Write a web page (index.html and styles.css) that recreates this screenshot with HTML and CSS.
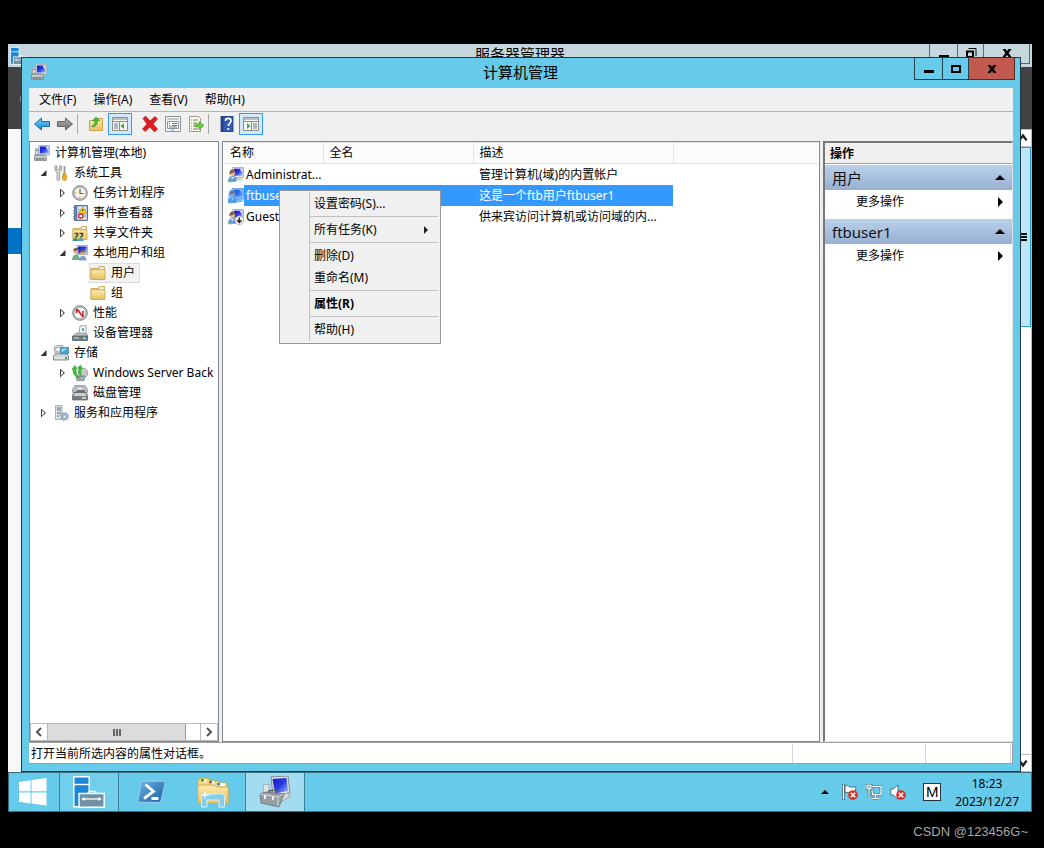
FILE: index.html
```
<!DOCTYPE html>
<html lang="zh-CN">
<head>
<meta charset="utf-8">
<title>计算机管理</title>
<link rel="stylesheet" href="styles.css">
</head>
<body>
<svg class="defs" aria-hidden="true">
  <defs>
    <linearGradient id="gScreen" x1="0" y1="0" x2="1" y2="1"><stop offset="0" stop-color="#0a14c8"/><stop offset=".5" stop-color="#2a3ce0"/><stop offset="1" stop-color="#a8c4ff"/></linearGradient>
    <linearGradient id="gBlue" x1="0" y1="0" x2="0" y2="1"><stop offset="0" stop-color="#7fd0fa"/><stop offset="1" stop-color="#0d84d8"/></linearGradient>
    <linearGradient id="gGray" x1="0" y1="0" x2="0" y2="1"><stop offset="0" stop-color="#b4b4b4"/><stop offset="1" stop-color="#6e6e6e"/></linearGradient>
    <linearGradient id="gFolder" x1="0" y1="0" x2="0" y2="1"><stop offset="0" stop-color="#fcebae"/><stop offset="1" stop-color="#e6c163"/></linearGradient>
    <linearGradient id="gMetal" x1="0" y1="0" x2="0" y2="1"><stop offset="0" stop-color="#eef1f2"/><stop offset="1" stop-color="#7c8488"/></linearGradient>
    <linearGradient id="gPs" x1="0" y1="0" x2="1" y2="1"><stop offset="0" stop-color="#6db4e6"/><stop offset="1" stop-color="#1a5f9e"/></linearGradient>
    <symbol id="computer" viewBox="0 0 16 16">
      <path d="M5 .5h10.500v9.500H5z" fill="#d9dde0" stroke="#b0b6ba"/><path d="M6 1.500H14.500v7H6z" fill="url(#gScreen)"/><path d="M11.500 1.500h3v5z" fill="#dbe7ff"/>
      <path d="M1.500 3.500h3v6h-3z" fill="#d6dadc" stroke="#a3aaae"/><path d="M2 5.500h2" stroke="#7a8488"/>
      <path d="M.5 10h10.500l1.500 2v3.500H.5z" fill="#a3abae" stroke="#7a8387" stroke-width=".7"/><path d="M1 12h11" stroke="#e8ebec"/><path d="M3 13v1.500m3-1.500v1.500m3-1.500v1.500" stroke="#454c50"/>
    </symbol>
    <symbol id="tools" viewBox="0 0 16 16">
      <path d="M2 1v4.500l2 1.500v7.500c0 1.300 2.600 1.300 2.600 0V7L8.500 5.500V1L6.700.8v3.700h-3V.8z" fill="#dcdcdc" stroke="#888" stroke-width=".8"/>
      <path d="M11.500 1v7" stroke="#999" stroke-width="1.800"/><path d="M10 8.500h3l.5 5c0 2.500-4 2.500-4 0z" fill="#f4a915" stroke="#c98a10" stroke-width=".7"/>
    </symbol>
    <symbol id="clock" viewBox="0 0 16 16"><circle cx="8" cy="8" r="7.300" fill="#c5c7c9" stroke="#85898c"/><circle cx="8" cy="8" r="5.700" fill="#fcf6e2" stroke="#98a0a4" stroke-width=".6"/><path d="M8 4v4.500h3.500" fill="none" stroke="#46617c" stroke-width="1.200"/><path d="M8 11v2M3.500 8H5" stroke="#d79b38"/></symbol>
    <symbol id="event" viewBox="0 0 16 16"><path d="M2.500.5h13v15h-13z" fill="#b6c9e6" stroke="#5471a0"/><path d="M2.500.5h2.500v15H2.500z" fill="#5b7ab0"/><path d="M1 2.500h3m-3 3h3m-3 3h3m-3 3h3m-3 2.500h3" stroke="#888"/><path d="M6.500 3h8M6.500 13.500h8" stroke="#fff"/><path d="m10.800 1.800 3.800 6.400H7z" fill="#ffdc20" stroke="#c49100" stroke-width=".7"/><path d="M10.800 4v2.500" stroke="#333"/><circle cx="8.800" cy="11" r="3" fill="#d9484a"/><path d="M7.700 10h2.200v2H7.700z" fill="#fff"/></symbol>
    <symbol id="folder" viewBox="0 0 16 16"><path d="M1 3.500h7l1.500-2h5v12.500H1z" fill="#e8c977" stroke="#c9a54f" stroke-width=".8"/><path d="M10 2.300h3.500v1.700H10z" fill="#fff"/><path d="M1 4.800h14v9.700H1z" fill="url(#gFolder)" stroke="#cca64d" stroke-width=".8"/></symbol>
    <symbol id="share" viewBox="0 0 16 16"><use href="#folder"/><path d="M2.500 8.500h3v2l-2 2M7.500 8.500h3v2l-2 2" fill="none" stroke="#4b4238" stroke-width="1.500"/><path d="M.5 16c0-4 5.500-4 5.500 0z" fill="#2e9a74"/><path d="M6 16c0-4 5.500-4 5.500 0z" fill="#4aa2cb"/></symbol>
    <symbol id="users" viewBox="0 0 16 16"><path d="M5 .5h10.500v9H5z" fill="#e1e5e7" stroke="#a8aeb2"/><path d="M6 1.500h8.500v7H6z" fill="url(#gScreen)"/><circle cx="4" cy="6" r="2.500" fill="#dca873"/><path d="M1.400 6c0-4 5.200-4 5.200-1z" fill="#7a5a3c"/><path d="M0 15c0-7.500 8-7.500 8 0z" fill="#74ae86"/><circle cx="10.500" cy="8" r="2.300" fill="#e2b183"/><path d="M8.200 8c0-4 4.800-4 4.800-1z" fill="#8b6742"/><path d="M7 15.500c0-6.500 7.500-6.500 7.500 0z" fill="#7f9fd2"/></symbol>
    <symbol id="user" viewBox="0 0 16 16"><path d="M4.500.5h11v10h-11z" fill="#dfe3e5" stroke="#b3b8bb"/><path d="M6 1.700h8.300v7H6z" fill="url(#gScreen)"/><path d="M11.500 1.700h2.800v4z" fill="#dbe7ff"/><path d="M8.500 11h5.500l1 2.500H8z" fill="#ccd1d3"/><circle cx="4.300" cy="6" r="2.800" fill="#e4b282"/><path d="M1.500 7C.7 1.500 7.500 1.500 7 5z" fill="#7f6148"/><path d="M0 14.500c0-7 8.500-7 9-1L7 15z" fill="#6b9cd6"/><path d="m3 10 1.200 2L6 10z" fill="#fff"/><path d="M0 14.500h4" stroke="#7bbd60" stroke-width="1.500"/></symbol>
    <symbol id="userSel" viewBox="0 0 16 16"><use href="#user"/><path d="M4.500 0h11.500v11l-2 3-7 1H0V8l1-5z" fill="#3399ff" opacity=".5"/></symbol>
    <symbol id="userOff" viewBox="0 0 16 16"><use href="#user"/><circle cx="11.300" cy="11.300" r="4.300" fill="#fafafa" stroke="#9da1a3" stroke-width=".8"/><path d="M11.300 8.500v5M9 11.200l2.300 2.300 2.300-2.300" fill="none" stroke="#222" stroke-width="1.400"/></symbol>
    <symbol id="perf" viewBox="0 0 16 16"><circle cx="8" cy="8" r="7.300" fill="#c9cccd" stroke="#808486"/><circle cx="8" cy="8" r="5.800" fill="#fff" stroke="#85898b" stroke-width=".6"/><path d="m5 4 6 8M4.500 8V5l3 1M11 6v6" fill="none" stroke="#cf2020" stroke-width="1.500"/></symbol>
    <symbol id="device" viewBox="0 0 16 16"><path d="m8 1 6-1v9H7z" fill="#f5f6f6" stroke="#a4aaac"/><path d="M10 3h2v3h-2z" fill="#58a9a0"/><path d="M4 8h9l3 2v2H0z" fill="#b9c0c3" stroke="#7d868a" stroke-width=".6"/><path d="M.5 11h15v4.500H.5z" fill="#6d7b81" stroke="#4e5a5f" stroke-width=".7"/><path d="M2 13h5" stroke="#dce4e6"/><path d="M11 12.500h3v1.500h-3z" fill="#a9e3ef"/></symbol>
    <symbol id="storage" viewBox="0 0 16 16"><path d="M1 2 4 .5h6L9 8H2z" fill="#d7dadb" stroke="#9ba2a6" stroke-width=".8"/><circle cx="5" cy="4.500" r="2.300" fill="#fff" stroke="#999" stroke-width=".8"/><path d="M7.500 2.500h8v6h-8z" fill="#3aa6d8" stroke="#577b8c" stroke-width=".8"/><path d="M8.500 3.500h6l-6 4z" fill="#8bd7f4"/><path d="m2 9-1.500 2v4h15v-4L14 9z" fill="url(#gMetal)" stroke="#6e767a" stroke-width=".8"/><path d="M1 11.500h14v3H1z" fill="#e0e4e5"/><path d="M12 12h2v2h-2z" fill="#38b838"/></symbol>
    <symbol id="backup" viewBox="0 0 16 16"><circle cx="11" cy="8" r="4.800" fill="#cbd0d2" stroke="#8b9397" stroke-width=".8"/><circle cx="11.500" cy="8" r="1.500" fill="#fff" stroke="#888" stroke-width=".7"/><path d="M4 11h9l-1 4.500H5z" fill="#a8afb2" stroke="#6e777b" stroke-width=".7"/><path d="M0 4 3 .5 5 4 4 5c0 3 1 6 4 8-5-1-7-4-7-8zM5.500 3l3-3 2 4H9c0 3-1 5 1 8-3-2-4-5-3-8z" fill="#3dbf36" stroke="#2f9a30" stroke-width=".5"/></symbol>
    <symbol id="disk" viewBox="0 0 16 16"><path d="M3 .5h10l2.500 4v3H.5v-3z" fill="#b9bdbf" stroke="#84898c" stroke-width=".7"/><ellipse cx="8" cy="3.500" rx="3.500" ry="1.500" fill="#f2f2f2" stroke="#888" stroke-width=".6"/><path d="m3 7-2.500 3v5h15v-5L13 7z" fill="#777e81" stroke="#5e6568" stroke-width=".7"/><path d="M3 8h10l2 3H1z" fill="#cdd0d1"/><path d="M10 13h4" stroke="#d6f1d5" stroke-width="1.500"/><path d="M5 6h8" stroke="#54595c" stroke-width="1.300"/></symbol>
    <symbol id="services" viewBox="0 0 16 16"><path d="M2.500.5H9v14H2.500z" fill="#dde1e3" stroke="#9aa2a6" stroke-width=".8"/><path d="M4 3h4M4 5h4M4 8h4" stroke="#5b7480"/><path d="M4 11h2" stroke="#3a9a4c"/><circle cx="11.500" cy="11.500" r="2.900" fill="#c6dbea" stroke="#7fa3bd" stroke-width="1.200"/><circle cx="11.500" cy="11.500" r="3.900" fill="none" stroke="#7fa3bd" stroke-width="1.200" stroke-dasharray="1.500 1.550"/><circle cx="11.500" cy="11.500" r="1.200" fill="#fff" stroke="#5f87a3" stroke-width=".6"/></symbol>
    <symbol id="badge" viewBox="0 0 10 10"><circle cx="5" cy="5" r="4.800" fill="#d92c23"/><path d="m2.800 2.800 4.400 4.400m0-4.400L2.800 7.200" stroke="#fff" stroke-width="1.600"/></symbol>
    <symbol id="server" viewBox="0 0 32 32"><path d="M.8.8h15.400v30H.8z" fill="#1c86d8" stroke="#fff" stroke-width="1.400"/><path d="M1 8.500h15" stroke="#fff" stroke-width="1.400"/><path d="M15 17c0-2.500 8-2.500 8 0" fill="none" stroke="#fff" stroke-width="1.300"/><path d="M6 17.500h25.200v13.700H6z" fill="#7192a4" stroke="#fff" stroke-width="1.400"/><path d="M9 23h19" stroke="#fff" stroke-width="1.300"/><path d="m8.500 23 3-2v4zm20 0-3-2v4z" fill="#fff"/></symbol>
  </defs>
</svg>

<div class="screen">
  <main class="desktop">
    <section class="bg-window" aria-label="服务器管理器">
      <header class="bg-title">
        <svg class="bg-icon" viewBox="0 0 32 32"><use href="#server"/></svg>
        <h2 class="bg-caption">服务器管理器</h2>
        <div class="controls bg-controls">
          <button class="ctl" aria-label="最小化"><svg viewBox="0 0 12 12"><path d="M1 8h10v3H1z"/></svg></button>
          <button class="ctl ctl-max" aria-label="还原"><svg viewBox="0 0 12 12"><path d="M2 4.500h6V10H2z" fill="none" stroke="#000" stroke-width="2"/><path d="M3.500 1.500h7.500V9" fill="none" stroke="#000"/></svg></button>
          <button class="ctl ctl-wide" aria-label="关闭"><svg viewBox="0 0 12 12"><path d="M1.500 2h3L6 4l1.500-2h3L7.700 6l2.800 4h-3L6 8l-1.500 2h-3l2.800-4z"/></svg></button>
        </div>
      </header>
      <div class="bg-banner"><svg class="bg-circle" viewBox="0 0 20 30"><circle cx="18" cy="15" r="14" fill="none" stroke="#ddd" stroke-width="3"/></svg></div>
      <div class="bg-body">
        <nav class="bg-nav"><div class="bg-selected"></div></nav>
        <div class="bg-scroll">
          <button class="bg-arrow" aria-label="向上滚动"><svg viewBox="0 0 10 10"><path d="m2 7 3-4 3 4" /></svg></button>
          <div class="bg-thumb"><i></i><i></i><i></i></div>
          <button class="bg-arrow bg-down" aria-label="向下滚动"><svg viewBox="0 0 10 10"><path d="m2 3 3 4 3-4" /></svg></button>
        </div>
      </div>
    </section>

    <section class="window" aria-label="计算机管理">
      <header class="titlebar">
        <svg class="icon title-icon"><use href="#computer"/></svg>
        <h1 class="caption">计算机管理</h1>
        <div class="controls">
          <button class="ctl" aria-label="最小化"><svg viewBox="0 0 12 12"><path d="M1 7h10v3H1z"/></svg></button>
          <button class="ctl ctl-max" aria-label="最大化"><svg viewBox="0 0 12 12"><path d="M2 3h8v6H2z" fill="none" stroke="#000" stroke-width="2"/></svg></button>
          <button class="ctl ctl-wide ctl-close" aria-label="关闭"><svg viewBox="0 0 12 12"><path d="M1.500 2h3L6 4l1.500-2h3L7.700 6l2.800 4h-3L6 8l-1.500 2h-3l2.800-4z"/></svg></button>
        </div>
      </header>
      <div class="frame">
        <nav class="menubar">
          <button>文件(F)</button><button>操作(A)</button><button>查看(V)</button><button>帮助(H)</button>
        </nav>
        <div class="toolbar">
          <button aria-label="后退"><svg class="icon" viewBox="0 0 16 16"><path d="m.5 8 7-6v3.500h8v5h-8V14z" fill="url(#gBlue)" stroke="#1c6eae"/></svg></button>
          <button aria-label="前进"><svg class="icon" viewBox="0 0 16 16"><path d="m15.500 8-7-6v3.500h-8v5h8V14z" fill="url(#gGray)" stroke="#666"/></svg></button>
          <span class="sep"></span>
          <button aria-label="上一级"><svg class="icon" viewBox="0 0 16 16"><path d="M1.500 4.500H8l1.500-2h5v12h-13z" fill="url(#gFolder)" stroke="#c9a54f"/><path d="M4 10c3-1 3-3 3-5.500H4.500L8 1l4 3.500H9.500c0 4-2 6-5 6.500z" fill="#49c437" stroke="#2b8c26" stroke-width=".6"/></svg></button>
          <button class="on" aria-label="显示控制台树"><svg class="icon" viewBox="0 0 16 16"><path d="M.5 1.500h15v13H.5z" fill="#f6f6f4" stroke="#8b8f91"/><path d="M1 3h14M1 5.500h14M7.500 6v8" stroke="#858c92"/><path d="M2 8h4M2 10h4M2 12h4" stroke="#627889"/><path d="M12 7v6l-3.500-3z" fill="#3fae2e"/></svg></button>
          <span class="sep sep-hidden"></span>
          <button aria-label="删除"><svg class="icon" viewBox="0 0 16 16"><path d="M1 2.500 3.500 0 8 5l5-4.500 2.500 2.500L11 8l4.500 5-3 3L8 11l-5 4.500L.5 13 5 8z" fill="#e01d22" stroke="#a70e12" stroke-width=".6"/></svg></button>
          <button aria-label="属性"><svg class="icon" viewBox="0 0 16 16"><path d="M.5.5h15v15H.5z" fill="#f5f5f5" stroke="#8f9496"/><path d="M2.500 3h11M2.500 5.500h11v7h-11z" fill="#fff" stroke="#8d989e"/><path d="M4 7.500h1m2 0h5M4 9.500h1m2 0h5M4 11h8" stroke="#667b88"/><path d="M6 14h3" stroke="#42b7df"/></svg></button>
          <button aria-label="导出列表"><svg class="icon" viewBox="0 0 16 16"><path d="M1.500.5h9l2 2v13h-11z" fill="#fdfbed" stroke="#a09c84"/><path d="M3 4h1m1 0h5M3 7h1m1 0h4M3 10h1m1 0h4M3 13h1m1 0h5" stroke="#777"/><path d="M7 8h4V5.500l5 4-5 4V11H7z" fill="#6ccb3a" stroke="#439a24" stroke-width=".6"/></svg></button>
          <span class="sep"></span>
          <button aria-label="帮助"><svg class="icon" viewBox="0 0 16 16"><path d="M2 0h12v16H2z" fill="#3458b8" stroke="#1d3274" stroke-width=".8"/><path d="M2.500 0h1.800v16H2.500z" fill="#203c88"/><path d="M6.500 5c0-3.500 5.500-3.500 5.500 0 0 2-2.700 2.200-2.700 5M9.300 12v2" fill="none" stroke="#fff" stroke-width="1.700"/></svg></button>
          <button class="on" aria-label="显示操作窗格"><svg class="icon" viewBox="0 0 16 16"><path d="M.5 1.500h15v13H.5z" fill="#f6f6f4" stroke="#8b8f91"/><path d="M1 3h14M1 5.500h14M8.500 6v8" stroke="#858c92"/><path d="M10 8h4M10 10h4M10 12h4" stroke="#627889"/><path d="M4 7v6l3.500-3z" fill="#3fae2e"/></svg></button>
        </div>

        <div class="panes">
          <aside class="pane tree-pane">
            <ul class="tree">
              <li class="l0"><svg class="icon"><use href="#computer"/></svg><span>计算机管理(本地)</span></li>
              <li class="l1"><b class="tw open"></b><svg class="icon"><use href="#tools"/></svg><span>系统工具</span></li>
              <li class="l2"><b class="tw"></b><svg class="icon"><use href="#clock"/></svg><span>任务计划程序</span></li>
              <li class="l2"><b class="tw"></b><svg class="icon"><use href="#event"/></svg><span>事件查看器</span></li>
              <li class="l2"><b class="tw"></b><svg class="icon"><use href="#share"/></svg><span>共享文件夹</span></li>
              <li class="l2"><b class="tw open"></b><svg class="icon"><use href="#users"/></svg><span>本地用户和组</span></li>
              <li class="l3"><span class="leaf picked"><svg class="icon"><use href="#folder"/></svg><span>用户</span></span></li>
              <li class="l3"><span class="leaf"><svg class="icon"><use href="#folder"/></svg><span>组</span></span></li>
              <li class="l2"><b class="tw"></b><svg class="icon"><use href="#perf"/></svg><span>性能</span></li>
              <li class="l2"><b class="tw none"></b><svg class="icon"><use href="#device"/></svg><span>设备管理器</span></li>
              <li class="l1"><b class="tw open"></b><svg class="icon"><use href="#storage"/></svg><span>存储</span></li>
              <li class="l2"><b class="tw"></b><svg class="icon"><use href="#backup"/></svg><span>Windows Server Back</span></li>
              <li class="l2"><b class="tw none"></b><svg class="icon"><use href="#disk"/></svg><span>磁盘管理</span></li>
              <li class="l1"><b class="tw"></b><svg class="icon"><use href="#services"/></svg><span>服务和应用程序</span></li>
            </ul>
            <div class="hscroll">
              <button aria-label="向左滚动"><svg viewBox="0 0 10 10"><path d="M7 1 3 5l4 4"/></svg></button>
              <div class="track"><div class="thumb"><i></i><i></i><i></i></div></div>
              <button aria-label="向右滚动"><svg viewBox="0 0 10 10"><path d="m3 1 4 4-4 4"/></svg></button>
            </div>
          </aside>

          <div class="pane list-pane">
            <table class="list">
              <colgroup><col class="c-name"><col class="c-full"><col class="c-desc"><col></colgroup>
              <thead><tr><th>名称</th><th>全名</th><th>描述</th><th></th></tr></thead>
              <tbody>
                <tr><td class="name"><div><svg class="icon"><use href="#user"/></svg><span>Administrat...</span></div></td><td></td><td>管理计算机(域)的内置帐户</td><td></td></tr>
                <tr class="selected"><td class="name"><div><svg class="icon"><use href="#userSel"/></svg><span>ftbuser1</span></div></td><td></td><td>这是一个ftb用户ftbuser1</td><td></td></tr>
                <tr><td class="name"><div><svg class="icon"><use href="#userOff"/></svg><span>Guest</span></div></td><td></td><td>供来宾访问计算机或访问域的内...</td><td></td></tr>
              </tbody>
            </table>
            <div class="context" role="menu">
              <button role="menuitem">设置密码(S)...</button>
              <hr>
              <button role="menuitem" class="has-sub">所有任务(K)</button>
              <hr>
              <button role="menuitem">删除(D)</button>
              <button role="menuitem">重命名(M)</button>
              <hr>
              <button role="menuitem" class="default">属性(R)</button>
              <hr>
              <button role="menuitem">帮助(H)</button>
            </div>
          </div>

          <aside class="actions">
            <h2 class="actions-head">操作</h2>
            <section class="group">
              <button class="group-head">用户</button>
              <button class="more">更多操作</button>
            </section>
            <section class="group">
              <button class="group-head">ftbuser1</button>
              <button class="more">更多操作</button>
            </section>
          </aside>
        </div>
        <footer class="status"><span class="status-text">打开当前所选内容的属性对话框。</span><span class="status-a"></span><span class="status-b"></span></footer>
      </div>
    </section>
  </main>

  <footer class="taskbar">
    <button class="start" aria-label="开始"><svg viewBox="0 0 28 28"><path d="m0 4 11.500-1.700v11H0zm12.500-1.900L27.500 0v13.300h-15zM0 14.500h11.500v11L0 23.800zm12.500 0h15V27.500l-15-2z" fill="#fff"/></svg></button>
    <button class="task running" aria-label="服务器管理器"><svg viewBox="0 0 32 32"><use href="#server"/></svg></button>
    <button class="task" aria-label="PowerShell"><svg viewBox="0 0 32 32"><path d="M7 5h22c1 0 1.600.7 1.300 1.700L26 25c-.3 1-1 1.500-2 1.500H4c-1 0-1.500-.7-1.200-1.700L6 6.500C6.200 5.500 6.500 5 7 5z" fill="url(#gPs)" stroke="#8fc6ea" stroke-width="1.300"/><path d="m10.500 8.500 8 7L9 22.500M16.500 22.500h7" fill="none" stroke="#fff" stroke-width="2.800"/></svg></button>
    <button class="task" aria-label="文件资源管理器"><svg viewBox="0 0 32 32"><path d="M1 5 3 2h8l2 3h8l2 2h7v6H1z" fill="#f1d88b" stroke="#cda84d"/><path d="M4 3h5v3H4zM12 5h5v3h-5zM20 7h8v3h-8z" fill="#fff"/><path d="M4 3h3v2.500H4z" fill="#20ad36"/><path d="M12 5h3v2.500h-3z" fill="#d8452e"/><path d="M20 7h3v2.500h-3z" fill="#2b8ddd"/><path d="M.8 9h16l3 2h11.400v16.500H3c-2 0-2.200-1-2.200-3z" fill="url(#gFolder)" stroke="#d0ac55"/><path d="M4.500 31V21c0-2 1-3 3-3h17c2 0 3 1 3 3v10H22v-7H10v7z" fill="#86cdea" stroke="#d9f1fb"/><path d="m8 13 1 5 5 1-5 1-1 5-1-5-5-1 5-1z" fill="#fff" opacity=".8"/></svg></button>
    <button class="task active" aria-label="计算机管理"><svg viewBox="0 0 32 32"><path d="m12 1 17-1 2 17-17 3z" fill="#dce1e3" stroke="#81898e"/><path d="m13.500 3 14-1L29 15l-13 2.500z" fill="url(#gScreen)"/><path d="m4 9 6-1v10H5z" fill="#e0e4e5" stroke="#9ba3a8" stroke-width=".8"/><path d="m19 19 10-2 2 4-10 5z" fill="#d6dadc" stroke="#999" stroke-width=".8"/><path d="M10 18v-3l7-1v4" fill="none" stroke="#596167" stroke-width="1.500"/><path d="m1 18 6-2 18 2-5 13-18-4z" fill="#969ea2" stroke="#666e73" stroke-width=".8"/><path d="m1 18 18 3 5-3M19 21v9" fill="none" stroke="#d8dde0"/><path d="M6 19v4m8-3v4" stroke="#ecefef" stroke-width="2"/></svg></button>
    <div class="tray">
      <button class="tray-up" aria-label="显示隐藏的图标"><svg viewBox="0 0 8 4"><path d="m0 4 4-4 4 4z"/></svg></button>
      <button aria-label="操作中心"><svg viewBox="0 0 16 16"><path d="M1.500 0v16" stroke="#36515d" stroke-width="2.400"/><path d="M1.500.5v15" stroke="#fff" stroke-width="1.200"/><path d="M3 2c3-2 4 2 7 1h4l-1 6c-3 2-5-2-10 0z" fill="#fff" stroke="#36515d" stroke-width=".8"/><use href="#badge" x="6" y="6" width="10" height="10"/></svg></button>
      <button aria-label="网络"><svg viewBox="0 0 16 16"><path d="M5.500 2.500H15v8H6.500zM9.500 11v3M6 14.500h7" fill="none" stroke="#36515d" stroke-width="2.600"/><path d="M5.500 2.500H15v8H6.500zM9.500 11v3.500M6 14.500h7" fill="none" stroke="#fff" stroke-width="1.400"/><path d="M1 1h4v4H1zM3 5v9" fill="#66caea" stroke="#36515d" stroke-width="2.400"/><path d="M1 1h4v4H1zM3 5v9" fill="#66caea" stroke="#fff" stroke-width="1.200"/></svg></button>
      <button aria-label="音量"><svg viewBox="0 0 16 16"><path d="M.7 5h2.600L8 .8v14.400L3.300 11H.7z" fill="#fff" stroke="#36515d" stroke-width=".8"/><use href="#badge" x="6" y="6" width="10" height="10"/></svg></button>
      <button class="ime" aria-label="输入法 M">M</button>
      <time class="time"><span>18:23</span><span>2023/12/27</span></time>
    </div>
  </footer>
</div>
<p class="watermark">CSDN @123456G~</p>
</body>
</html>
```

FILE: styles.css
```
* { box-sizing: border-box; }
body {
  margin: 0;
  min-height: 100vh;
  display: flex;
  flex-direction: column;
  padding: 44px 12px 0 8px;
  background: #000;
  color: #000;
  font: 12px/20px "Noto Sans", "Noto Sans CJK SC", sans-serif;
}
h1, h2, p, ul { margin: 0; padding: 0; font-weight: 400; }
ul { list-style: none; }
button {
  font: inherit;
  color: inherit;
  background: none;
  border: 0;
  padding: 0;
  margin: 0;
  text-align: left;
}
svg { display: block; flex: none; }
.defs { position: absolute; width: 0; height: 0; }
.icon { width: 16px; height: 16px; }
.screen { flex: 1; display: flex; flex-direction: column; }
.desktop { flex: 1; position: relative; display: flex; }

/* Window captions */
.controls { display: flex; justify-self: end; }
.ctl {
  width: 29px;
  height: 22px;
  display: flex;
  align-items: center;
  justify-content: center;
  border: 1px solid #1f424f;
  border-top: 0;
}
.ctl + .ctl { border-left: 0; }
.ctl svg { width: 12px; height: 12px; }
.ctl-max { width: 26px; }
.ctl-wide { width: 46px; }
.ctl-close { background: #c2594f; border-color: #5c2a2a; }

/* Server manager behind */
.bg-window { flex: 1; display: flex; flex-direction: column; background: #fff; }
.bg-title {
  height: 23px;
  display: grid;
  grid-template-columns: 1fr auto 1fr;
  background: #c5d7dd;
  overflow: hidden;
}
.bg-icon { width: 18px; height: 18px; margin: 3px 0 0 2px; }
.bg-caption { font-size: 15px; line-height: 20px; }
.bg-controls { margin-right: 2px; }
.bg-controls .ctl { height: 20px; padding-bottom: 2px; border-color: #5a6a70; }
.bg-banner { height: 62px; background: #424242; overflow: hidden; }
.bg-circle { width: 20px; height: 30px; margin: 17px 0 0 10px; }
.bg-body { flex: 1; display: flex; justify-content: space-between; }
.bg-nav { width: 100px; padding-top: 99px; background: #f8f8f8; }
.bg-selected { height: 26px; background: #0072c6; }
.bg-scroll { width: 18px; display: flex; flex-direction: column; border: 1px solid #bbb; border-left: 0; }
.bg-arrow { height: 17px; display: flex; align-items: center; justify-content: center; border-bottom: 1px solid #bbb; background: #fff; }
.bg-arrow svg { width: 12px; height: 12px; }
.bg-arrow path { fill: none; stroke: #222; stroke-width: 2; }
.bg-thumb {
  height: 180px;
  display: flex;
  flex-direction: column;
  align-items: center;
  justify-content: center;
  gap: 1px;
  background: #bde6fd;
  border: 1px solid #26a0c8;
}
.bg-thumb i { width: 8px; height: 2px; background: #111; }
.bg-down { margin-top: auto; border-top: 1px solid #bbb; border-bottom: 0; }

/* Main window */
.window {
  position: absolute;
  inset: 13px 11px 0 13px;
  display: flex;
  flex-direction: column;
  background: #66caea;
  border: 1px solid #1f3a45;
}
.titlebar { height: 29px; display: grid; grid-template-columns: 1fr auto 1fr; align-items: start; padding-right: 5px; }
.title-icon { margin: 6px 0 0 9px; }
.caption { font-size: 15px; line-height: 29px; padding-left: 4px; }
.frame { flex: 1; display: flex; flex-direction: column; min-height: 0; margin: 0 7px 7px; background: #f0f0f0; }
.menubar { height: 25px; display: flex; gap: 17px; padding: 0 10px; border-top: 1px solid #9ab0bb; border-bottom: 1px solid #b4b4b4; }
.toolbar { height: 29px; display: flex; align-items: center; padding: 0 1px 5px; }
.toolbar button { width: 23px; height: 22px; display: flex; align-items: center; justify-content: center; }
.toolbar .on { width: 24px; margin-left: 1px; background: #d3e9fa; border: 1px solid #3399ff; }
.sep { width: 1px; height: 20px; margin: 0 6px 0 1px; background: #aaa; }
.sep-hidden { margin-left: 0; margin-right: 5px; background: none; }
.panes { flex: 1; min-height: 0; display: flex; gap: 3px; }
.pane { background: #fff; border: 1px solid #828790; }
.tree-pane { width: 190px; flex: none; display: flex; flex-direction: column; }
.tree { flex: 1; padding-top: 1px; overflow: hidden; }
.tree li { height: 20px; display: flex; align-items: center; white-space: nowrap; }
.tree .icon { margin-right: 5px; }
.l0 { padding-left: 4px; }
.l1 { padding-left: 8px; }
.l2 { padding-left: 27px; }
.l3 { padding-left: 59px; }
.tw { width: 11px; height: 11px; margin-right: 4px; flex: none; display: flex; align-items: center; justify-content: center; }
.tw::before { content: ""; width: 5px; height: 9px; background: #444; clip-path: polygon(0 0, 100% 50%, 0 100%, 0 12%, 1px 20%, 1px 80%, 70% 50%, 0 12%); }
.tw.open::before { width: 6px; height: 6px; background: #333; clip-path: polygon(100% 0, 100% 100%, 0 100%); }
.tw.none::before { display: none; }
.leaf { height: 20px; display: flex; align-items: center; padding-right: 4px; border: 1px solid transparent; }
.picked { background: #f2f2f2; border-color: #dadada; }
.hscroll { height: 18px; display: flex; background: #fff; }
.hscroll button { width: 18px; display: flex; align-items: center; justify-content: center; border: 1px solid #bbb; }
.hscroll svg { width: 10px; height: 10px; }
.hscroll path { fill: none; stroke: #555; stroke-width: 2; }
.track { flex: 1; border: solid #bbb; border-width: 1px 0; }
.thumb { width: 91%; height: 16px; display: flex; align-items: center; justify-content: center; gap: 1px; background: #dcdcdc; border-right: 1px solid #999; }
.thumb i { width: 2px; height: 7px; background: #666; }

.list-pane { flex: 1; min-width: 0; position: relative; padding-left: 1px; }
.list { width: 100%; table-layout: fixed; border-collapse: collapse; }
.c-name { width: 99px; }
.c-full { width: 150px; }
.c-desc { width: 200px; }
.list th { height: 21px; padding: 0 6px; font-weight: 400; text-align: left; line-height: 20px; background: #fcfcfc; border: solid #e3e3e3; border-width: 1px 1px 1px 0; }
.list th:last-child { border-right: 0; }
.list td { height: 21px; padding: 0 6px; line-height: 21px; white-space: nowrap; }
.list td.name { padding: 0 0 0 4px; }
.name div { display: flex; align-items: center; }
.name span { flex: 1; padding-left: 2px; }
.selected { color: #fff; }
.selected .name span, .selected td:nth-child(2), .selected td:nth-child(3) { background: #3399ff; }

.context {
  position: absolute;
  left: 56px;
  top: 48px;
  width: 162px;
  display: flex;
  flex-direction: column;
  padding: 2px;
  background: linear-gradient(#c0c0c0, #c0c0c0) 29px 2px / 1px calc(100% - 4px) no-repeat #f0f0f0;
  border: 1px solid #979797;
}
.context button { height: 22px; padding-left: 32px; line-height: 22px; }
.context hr { width: 128px; height: 1px; margin: 1px 0 2px 28px; border: 0; background: #c0c0c0; }
.context .default { font-weight: 700; }
.context .has-sub { display: flex; align-items: center; justify-content: space-between; padding-right: 10px; }
.has-sub::after { content: ""; width: 4px; height: 8px; background: #222; clip-path: polygon(0 0, 100% 50%, 0 100%); }

.actions { width: 190px; flex: none; display: flex; flex-direction: column; background: #fff; border: solid #777; border-width: 2px 1px 1px 2px; border-right-color: #e3e3e3; border-bottom-color: #e3e3e3; }
.actions-head { height: 21px; padding-left: 5px; font-size: 12px; line-height: 21px; font-weight: 700; background: #f0f0f0; border-bottom: 1px solid #a0a0a0; margin-bottom: 1px; }
.group { display: flex; flex-direction: column; margin-bottom: 5px; }
.group-head { height: 25px; display: flex; align-items: center; justify-content: space-between; padding: 0 7px; font-size: 15px; color: #111; background: linear-gradient(#b9d1ea, #98b0d0); }
.group-head::after { content: ""; width: 10px; height: 5px; background: #000; clip-path: polygon(50% 0, 100% 100%, 0 100%); }
.more { height: 24px; display: flex; align-items: center; justify-content: space-between; padding: 0 9px 0 31px; }
.more::after { content: ""; width: 5px; height: 10px; background: #000; clip-path: polygon(0 0, 100% 50%, 0 100%); }

.status { height: 22px; display: flex; background: #fff; border: 1px solid #a0a0a0; border-left: 0; padding: 1px 1px 0 2px; }
.status-text { flex: 1; }
.status-a { width: 133px; border-left: 1px solid #d7d7d7; }
.status-b { width: 86px; border: solid #d7d7d7; border-width: 0 1px; }

/* Taskbar */
.taskbar { height: 40px; display: flex; gap: 2px; background: #66caea; border: 1px solid #3a6f82; }
.taskbar button { display: flex; align-items: center; justify-content: center; }
.start { width: 48px; }
.start svg { width: 28px; height: 28px; }
.task { width: 60px; border: solid transparent; border-width: 0 1px; }
.task svg { width: 32px; height: 32px; }
.running { background: #72cfec; border-color: #3d7f96; }
.active { background: #a3dcf1; border-color: #3d7f96; }
.tray { margin-left: auto; display: flex; align-items: center; gap: 8px; padding-right: 12px; }
.tray svg { width: 16px; height: 16px; }
.tray .tray-up { margin-right: 5px; }
.tray .tray-up svg { width: 8px; height: 4px; }
.tray .ime { width: 16px; height: 16px; margin: 0 7px 0 10px; background: #fff; outline: 1px solid #234; font: 15px/16px "Liberation Sans", sans-serif; }
.time { display: flex; flex-direction: column; align-items: center; line-height: 18px; padding-top: 1px; }

.watermark { height: 36px; padding: 0 4px; text-align: right; color: #a6a6a6; font: 13px/40px "Liberation Sans", sans-serif; }
```
